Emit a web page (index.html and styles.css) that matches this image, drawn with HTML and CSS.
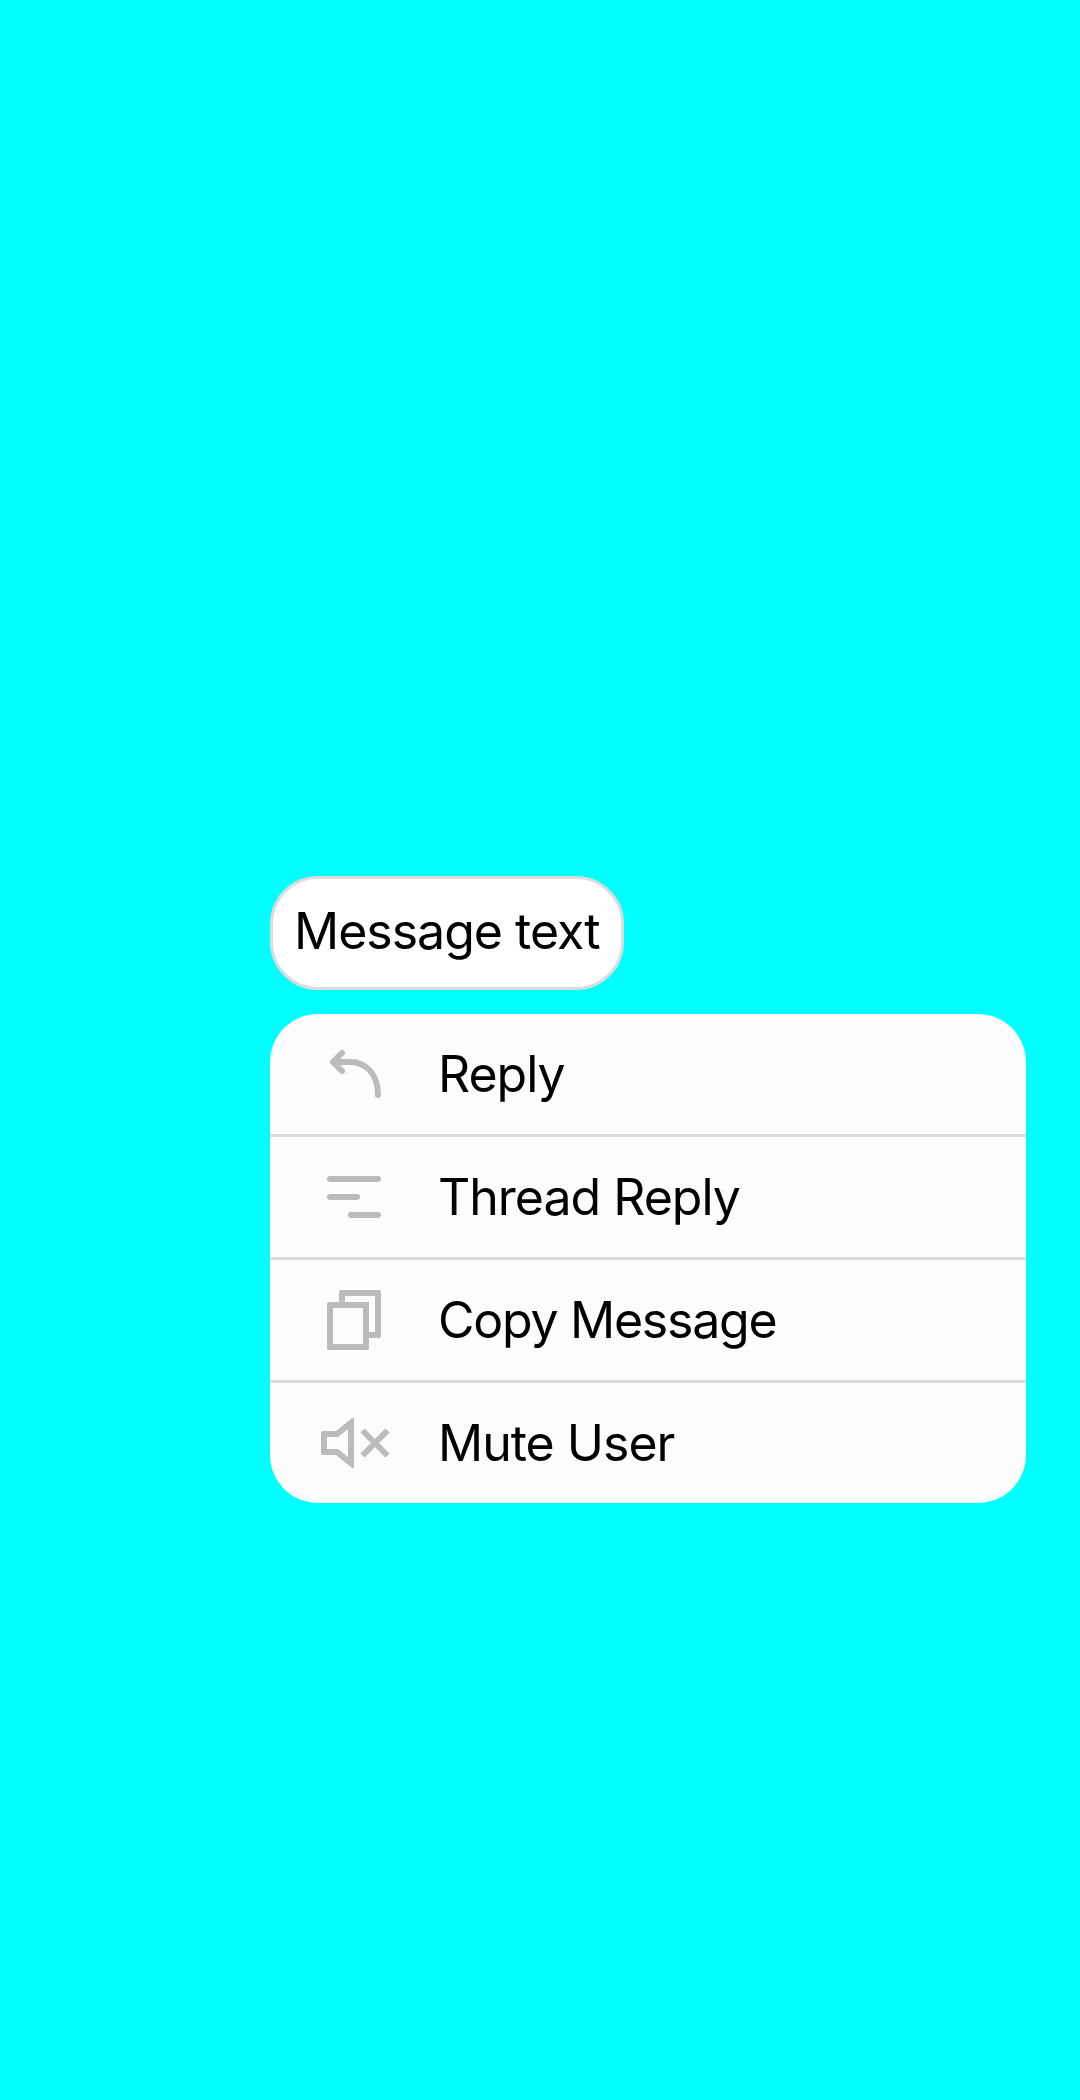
FILE: index.html
```html
<!DOCTYPE html>
<html lang="en">
<head>
<meta charset="utf-8">
<title>Message actions</title>
<link rel="stylesheet" href="styles.css">
</head>
<body>
<main class="overlay">
  <div class="bubble"><span class="bubble-text">Message text</span></div>
  <ul class="menu">
    <li class="action">
      <svg class="icon stroked" viewBox="0 0 72 72"><path d="M24 15L15 24L24 33M15 24H32C48 24 60 36 60 57"/></svg>
      <span class="label">Reply</span>
    </li>
    <li class="action">
      <svg class="icon stroked" viewBox="0 0 72 72"><path d="M12 18H60M12 36H39M33 54H60"/></svg>
      <span class="label">Thread Reply</span>
    </li>
    <li class="action">
      <svg class="icon" viewBox="0 0 72 72"><path fill-rule="evenodd" d="M11 18H51V64Q51 66 49 66H11Q9 66 9 64V20Q9 18 11 18ZM15 24V60H45V24Z"/><path d="M21 18V8Q21 6 23 6H61Q63 6 63 8V52Q63 54 61 54H51V48H57V12H27V18Z"/></svg>
      <span class="label copy">Copy Message</span>
    </li>
    <li class="action">
      <svg class="icon" viewBox="0 0 72 72"><path fill-rule="evenodd" d="M5 24H18L34 11Q36 10 36 12V60Q36 62 34 61L18 48H5Q3 48 3 46V26Q3 24 5 24ZM9 30V42H20L30 50V22L20 30Z"/><path class="cross" d="M44.5 23.5L69.5 48.5M69.5 23.5L44.5 48.5"/></svg>
      <span class="label">Mute User</span>
    </li>
  </ul>
</main>
</body>
</html>
```
FILE: styles.css
```css
* { box-sizing: border-box; }
body {
  margin: 0;
  min-height: 2100px;
  background: #00ffff;
  color: #000;
  font-family: Inter, "Liberation Sans", sans-serif;
  font-size: 50px;
}
.overlay {
  display: flex;
  flex-direction: column;
  align-items: flex-start;
  gap: 24px;
  padding: 876px 54px 0 270px;
}
.bubble {
  display: flex;
  align-items: center;
  width: 354px;
  height: 114px;
  padding: 0 0 4px 21px;
  border: 3px solid #dbdbdb;
  border-radius: 48px;
  background: #fff;
}
.bubble-text, .label { white-space: nowrap; line-height: 60px; letter-spacing: -1px; }
.menu {
  width: 756px;
  margin: 0;
  padding: 0;
  overflow: hidden;
  list-style: none;
  border-radius: 48px;
  background: #fcfcfc;
}
.action {
  display: flex;
  align-items: center;
  gap: 48px;
  height: 120px;
  padding-left: 48px;
}
.action + .action { height: 123px; border-top: 3px solid #dbdbdb; }
.icon { width: 72px; height: 72px; flex: none; fill: #bbb; }
.stroked, .cross { fill: none; stroke: #bbb; stroke-width: 6; }
.stroked { stroke-linecap: round; stroke-linejoin: round; }
.copy { letter-spacing: -1.25px; }
```
